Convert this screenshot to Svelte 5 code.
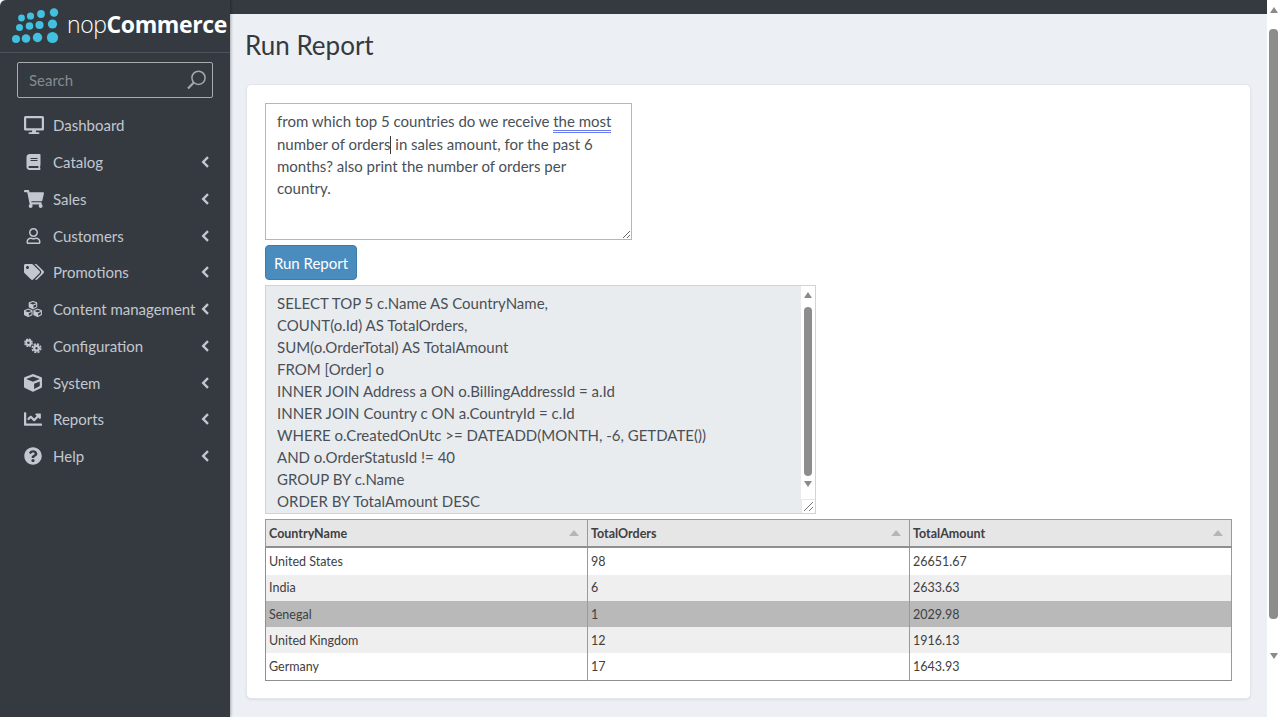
<script>
    const menu = [
        { label: 'Dashboard', icon: 'desktop', sub: false },
        { label: 'Catalog', icon: 'book', sub: true },
        { label: 'Sales', icon: 'cart', sub: true },
        { label: 'Customers', icon: 'user', sub: true },
        { label: 'Promotions', icon: 'tags', sub: true },
        { label: 'Content management', icon: 'cubes', sub: true },
        { label: 'Configuration', icon: 'cogs', sub: true },
        { label: 'System', icon: 'cube', sub: true },
        { label: 'Reports', icon: 'chart', sub: true },
        { label: 'Help', icon: 'help', sub: true }
    ];

    const cubePath = 'M239.1 6.3l-208 78c-18.7 7-31.1 25-31.1 45v225.1c0 18.2 10.3 34.8 26.5 42.9l208 104c13.5 6.8 29.4 6.8 42.9 0l208-104c16.3-8.1 26.5-24.8 26.5-42.9V129.3c0-20-12.4-37.9-31.1-44.9l-208-78C262 2.2 250 2.2 239.1 6.3zM256 68.4l192 72v1.1l-192 78-192-78v-1.1l192-72zm32 356V275.5l160-65v133.9l-160 80z';

    const paths = {
        desktop: { w: 576, h: 512, d: 'M528 0H48C21.5 0 0 21.5 0 48v320c0 26.5 21.5 48 48 48h192l-16 48h-72c-13.3 0-24 10.7-24 24s10.7 24 24 24h272c13.3 0 24-10.7 24-24s-10.7-24-24-24h-72l-16-48h192c26.5 0 48-21.5 48-48V48c0-26.5-21.5-48-48-48zm-16 352H64V64h448v288z' },
        book: { w: 448, h: 512, d: 'M448 360V24c0-13.3-10.7-24-24-24H96C43 0 0 43 0 96v320c0 53 43 96 96 96h328c13.3 0 24-10.7 24-24v-16c0-7.5-3.5-14.3-8.9-18.7-4.2-15.4-4.2-59.3 0-74.7 5.4-4.3 8.9-11.1 8.9-18.6zM128 134c0-3.3 2.7-6 6-6h212c3.3 0 6 2.7 6 6v20c0 3.3-2.7 6-6 6H134c-3.3 0-6-2.7-6-6v-20zm0 64c0-3.3 2.7-6 6-6h212c3.3 0 6 2.7 6 6v20c0 3.3-2.7 6-6 6H134c-3.3 0-6-2.7-6-6v-20zm253.4 250H96c-17.7 0-32-14.3-32-32 0-17.6 14.4-32 32-32h285.4c-1.9 17.1-1.9 46.9 0 64z' },
        cart: { w: 576, h: 512, d: 'M528.12 301.319l47.273-208C578.806 78.301 567.391 64 551.99 64H159.208l-9.166-44.81C147.758 8.021 137.93 0 126.529 0H24C10.745 0 0 10.745 0 24v16c0 13.255 10.745 24 24 24h69.883l70.248 343.435C147.325 417.1 136 435.222 136 456c0 30.928 25.072 56 56 56s56-25.072 56-56c0-15.674-6.447-29.835-16.824-40h209.647C430.447 426.165 424 440.326 424 456c0 30.928 25.072 56 56 56s56-25.072 56-56c0-22.172-12.888-41.332-31.579-50.405l5.517-24.276c3.413-15.018-8.002-29.319-23.403-29.319H218.117l-6.545-32h293.145c11.206 0 20.92-7.754 23.403-18.681z' },
        user: { w: 448, h: 512, d: 'M313.6 304c-28.7 0-42.5 16-89.6 16-47.1 0-60.8-16-89.6-16C60.2 304 0 364.2 0 438.4V464c0 26.5 21.5 48 48 48h352c26.5 0 48-21.5 48-48v-25.6c0-74.2-60.2-134.4-134.4-134.4zM400 464H48v-25.6c0-47.6 38.8-86.4 86.4-86.4 14.6 0 38.3 16 89.6 16 51.7 0 74.9-16 89.6-16 47.6 0 86.4 38.8 86.4 86.4V464zM224 288c79.5 0 144-64.5 144-144S303.5 0 224 0 80 64.5 80 144s64.5 144 144 144zm0-240c52.9 0 96 43.1 96 96s-43.1 96-96 96-96-43.1-96-96 43.1-96 96-96z' },
        tags: { w: 640, h: 512, d: 'M497.941 225.941L286.059 14.059A48 48 0 0 0 252.118 0H48C21.49 0 0 21.49 0 48v204.118a48 48 0 0 0 14.059 33.941l211.882 211.882c18.744 18.745 49.136 18.746 67.882 0l204.118-204.118c18.745-18.745 18.745-49.137 0-67.882zM112 160c-26.51 0-48-21.49-48-48s21.49-48 48-48 48 21.49 48 48-21.49 48-48 48zm513.941 133.823L421.823 497.941c-18.745 18.745-49.137 18.745-67.882 0l-.36-.36L527.64 323.522c16.999-16.999 26.36-39.6 26.36-63.64s-9.362-46.641-26.36-63.64L331.397 0h48.721a48 48 0 0 1 33.941 14.059l211.882 211.882c18.745 18.745 18.745 49.137 0 67.882z' },
        cube: { w: 512, h: 512, d: cubePath },
        chart: { w: 512, h: 512, d: 'M496 384H64V80c0-8.84-7.16-16-16-16H16C7.16 64 0 71.16 0 80v336c0 17.67 14.33 32 32 32h464c8.84 0 16-7.16 16-16v-32c0-8.84-7.16-16-16-16zM464 96H345.94c-21.38 0-32.09 25.85-16.97 40.97l32.4 32.4L288 242.75l-73.37-73.37c-12.5-12.5-32.76-12.5-45.25 0l-68.69 68.69c-6.25 6.25-6.25 16.38 0 22.63l22.62 22.62c6.25 6.25 16.38 6.25 22.63 0L192 237.25l73.37 73.37c12.5 12.5 32.76 12.5 45.25 0l96-96 32.4 32.4c15.12 15.12 40.97 4.41 40.97-16.97V112c0-8.84-7.16-16-16-16z' },
        help: { w: 512, h: 512, d: 'M504 256c0 136.997-111.043 248-248 248S8 392.997 8 256C8 119.083 119.043 8 256 8s248 111.083 248 248zM262.655 90c-54.497 0-89.255 22.957-116.549 63.758-3.536 5.286-2.353 12.415 2.715 16.258l34.699 26.31c5.205 3.947 12.621 3.008 16.665-2.122 17.864-22.658 30.113-35.797 57.303-35.797 20.429 0 45.698 13.148 45.698 32.958 0 14.976-12.363 22.667-32.534 33.976C247.128 238.528 216 254.941 216 296v4c0 6.627 5.373 12 12 12h56c6.627 0 12-5.373 12-12v-1.333c0-28.462 83.186-29.647 83.186-106.667 0-58.002-60.165-102-116.531-102zM256 338c-25.365 0-46 20.635-46 46 0 25.364 20.635 46 46 46s46-20.636 46-46c0-25.365-20.635-46-46-46z' }
    };

    const logoDots = [
        [21.5, 18, 3.4], [30.5, 16, 3.6], [41, 14, 3.9], [54, 12.5, 4.2],
        [19.5, 27.5, 3.5], [29.5, 26, 3.8], [39.5, 25, 4.1], [52.5, 24, 4.6],
        [16, 39, 4], [26, 38.5, 4.3], [37.5, 37.5, 4.7], [52.5, 37.5, 5.6]
    ];

    const sqlLines = [
        'SELECT TOP 5 c.Name AS CountryName,',
        'COUNT(o.Id) AS TotalOrders,',
        'SUM(o.OrderTotal) AS TotalAmount',
        'FROM [Order] o',
        'INNER JOIN Address a ON o.BillingAddressId = a.Id',
        'INNER JOIN Country c ON a.CountryId = c.Id',
        'WHERE o.CreatedOnUtc >= DATEADD(MONTH, -6, GETDATE())',
        'AND o.OrderStatusId != 40',
        'GROUP BY c.Name',
        'ORDER BY TotalAmount DESC'
    ];

    const columns = ['CountryName', 'TotalOrders', 'TotalAmount'];
    const rows = [
        ['United States', '98', '26651.67'],
        ['India', '6', '2633.63'],
        ['Senegal', '1', '2029.98'],
        ['United Kingdom', '12', '1916.13'],
        ['Germany', '17', '1643.93']
    ];
    const selectedRow = 2;
</script>

<div class="shell">
    <aside class="sidebar">
        <div class="brand">
            <svg class="logo-dots" width="62" height="46" viewBox="0 0 62 46">
                {#each logoDots as [cx, cy, r]}
                    <circle {cx} {cy} {r} fill="#41c0e0" />
                {/each}
            </svg>
            <span class="brand-name"><span class="nop">nop</span><b>Commerce</b></span>
        </div>
        <div class="search">
            <span>Search</span>
            <svg width="22" height="22" viewBox="0 0 22 22" fill="none" stroke="#a5a8ab" stroke-width="1.5">
                <circle cx="12.5" cy="8.8" r="6.6" />
                <path d="M7.8 13.6L2 19.5" stroke-width="2.2" />
            </svg>
        </div>
        <nav>
            {#each menu as item}
                <div class="item">
                    <span class="icon">
                        {#if item.icon === 'cubes'}
                            <svg width="20" height="18" viewBox="0 0 20 18" fill="#c2c7d0">
                                <g transform="translate(5.2 0) scale(0.0186)"><path d={cubePath} /></g>
                                <g transform="translate(0 8.5) scale(0.0186)"><path d={cubePath} /></g>
                                <g transform="translate(10.4 8.5) scale(0.0186)"><path d={cubePath} /></g>
                            </svg>
                        {:else if item.icon === 'cogs'}
                            <svg width="21" height="18" viewBox="0 0 21 18" fill="none" stroke="#c2c7d0">
                                <circle cx="5.2" cy="5.2" r="2.6" stroke-width="2.2" />
                                <circle cx="5.2" cy="5.2" r="4.2" stroke-width="1.8" stroke-dasharray="2.2 1.1" />
                                <circle cx="14.6" cy="11.6" r="2.7" stroke-width="2.6" />
                                <circle cx="14.6" cy="11.6" r="4.9" stroke-width="2" stroke-dasharray="2.4 1.45" />
                            </svg>
                        {:else}
                            <svg class={item.icon} viewBox="0 0 {paths[item.icon].w} {paths[item.icon].h}" fill="#c2c7d0">
                                <path d={paths[item.icon].d} />
                            </svg>
                        {/if}
                    </span>
                    <span class="label">{item.label}</span>
                    {#if item.sub}
                        <svg class="chevron" width="9" height="12" viewBox="0 0 9 12" fill="none" stroke="#c2c7d0" stroke-width="2.4">
                            <path d="M7 1.2L2.2 6L7 10.8" />
                        </svg>
                    {/if}
                </div>
            {/each}
        </nav>
    </aside>

    <main class="main">
        <div class="topbar"></div>
        <h1>Run Report</h1>
        <section class="card">
            <div class="prompt">from which top 5 countries do we receive <span class="flagged">the most</span> number of orders<span class="caret"></span> in sales amount, for the past 6 months? also print the number of orders per country.</div>
            <button class="run">Run Report</button>
            <div class="sql">
                <div class="sql-text">
                    {#each sqlLines as line}
                        <div>{line}</div>
                    {/each}
                </div>
                <div class="bar inner">
                    <span class="arrow up"></span>
                    <span class="thumb inner-thumb"></span>
                    <span class="arrow down"></span>
                    <span class="grip">
                        <svg width="12" height="12" viewBox="0 0 12 12" stroke="#777" stroke-width="1">
                            <path d="M2 11L11 2M7 11L11 7" />
                        </svg>
                    </span>
                </div>
            </div>
            <table>
                <thead>
                    <tr>
                        {#each columns as col}
                            <th><div class="th-inner">{col}<span class="sort"></span></div></th>
                        {/each}
                    </tr>
                </thead>
                <tbody>
                    {#each rows as row, i}
                        <tr class:odd={i % 2 === 1} class:selected={i === selectedRow}>
                            {#each row as cell}
                                <td>{cell}</td>
                            {/each}
                        </tr>
                    {/each}
                </tbody>
            </table>
        </section>
    </main>

    <div class="bar page">
        <span class="arrow up"></span>
        <span class="thumb page-thumb"></span>
        <span class="arrow down"></span>
    </div>
</div>

<style>
    :global(body) {
        margin: 0;
        background: #fff;
        font-family: "Lato", "Liberation Sans", sans-serif;
    }

    .shell {
        display: flex;
        height: 717px;
        overflow: hidden;
    }

    .sidebar {
        width: 230px;
        flex: none;
        background: #343a40;
        color: #c2c7d0;
        border-top-left-radius: 6px;
        box-shadow: 1px 0 3px rgba(0, 0, 0, 0.3);
        z-index: 1;
    }

    .brand {
        position: relative;
        height: 52px;
        border-bottom: 1px solid #4b545c;
        box-sizing: content-box;
    }

    .logo-dots {
        position: absolute;
        left: 0;
        top: 0;
    }

    .brand-name {
        position: absolute;
        left: 67px;
        top: 8px;
        font-family: "Open Sans", sans-serif;
        font-size: 23px;
        line-height: 32px;
        letter-spacing: -0.4px;
        color: #fff;
        white-space: nowrap;
    }

    .nop {
        font-weight: 300;
    }

    .brand-name b {
        font-weight: 700;
    }

    .search {
        margin: 9px 17px 0;
        height: 34px;
        display: flex;
        align-items: center;
        justify-content: space-between;
        padding: 0 4px 0 11px;
        border: 1px solid #a8acae;
        border-radius: 2px;
        color: #868b90;
        font-size: 15px;
    }

    nav {
        margin-top: 9px;
    }

    .item {
        display: flex;
        align-items: center;
        height: 36.75px;
        padding-left: 24px;
        font-size: 15px;
    }

    .icon {
        width: 29px;
        flex: none;
        display: flex;
    }

    .icon svg {
        width: 18px;
        height: 18px;
    }

    .icon svg.desktop {
        width: 20px;
    }

    .icon svg.cart {
        width: 20px;
    }

    .icon svg.tags {
        width: 20px;
    }

    .icon svg.book,
    .icon svg.user {
        margin-left: 2px;
        width: 15px;
        height: 16px;
    }

    .label {
        flex: 1;
        white-space: nowrap;
    }

    .chevron {
        margin-right: 20px;
    }

    .main {
        flex: 1;
        min-width: 0;
        background: #ecf0f5;
        padding: 0 16px;
    }

    .topbar {
        height: 14px;
        margin: 0 -16px;
        background: #343a40;
    }

    h1 {
        margin: 0;
        height: 70px;
        line-height: 62px;
        font-size: 26px;
        font-weight: 400;
        color: #343a40;
        margin-left: -1px;
    }

    .card {
        height: 615px;
        box-sizing: border-box;
        padding: 18px 18px 0;
        background: #fff;
        border: 1px solid #e3e6ea;
        border-radius: 5px;
        box-shadow: 0 1px 2px rgba(0, 0, 0, 0.08);
        display: flex;
        flex-direction: column;
        align-items: flex-start;
        color: #495057;
        font-size: 15px;
    }

    .prompt {
        width: 367px;
        height: 137px;
        box-sizing: border-box;
        padding: 6px 11px;
        line-height: 22px;
        border: 1px solid #92bdf0;
        resize: both;
        overflow: auto;
    }

    .flagged {
        border-bottom: 3px double #6c7cf0;
        line-height: 17px;
        display: inline-block;
    }

    .caret {
        display: inline-block;
        width: 1px;
        height: 18px;
        margin-bottom: -4px;
        background: #343a40;
    }

    .run {
        margin-top: 5px;
        width: 92px;
        height: 35px;
        padding: 0;
        background: #4a8cbd;
        border: 1px solid #3c7cab;
        border-radius: 4px;
        color: #fff;
        font: 15px "Lato", sans-serif;
    }

    .sql {
        margin-top: 5px;
        width: 551px;
        height: 229px;
        box-sizing: border-box;
        border: 1px solid #ced4da;
        display: flex;
        background: #e9ecef;
    }

    .sql-text {
        flex: 1;
        padding: 6px 11px;
        line-height: 22px;
        white-space: nowrap;
    }

    .bar {
        display: flex;
        flex-direction: column;
        align-items: center;
        background: #fff;
    }

    .bar.inner {
        width: 14px;
        padding-top: 6px;
        box-sizing: border-box;
        position: relative;
    }

    .bar.page {
        width: 13px;
        flex: none;
        padding-top: 7px;
        box-sizing: border-box;
    }

    .arrow {
        width: 0;
        height: 0;
        border-left: 4.5px solid transparent;
        border-right: 4.5px solid transparent;
    }

    .arrow.up {
        border-bottom: 6px solid #8a8a8a;
    }

    .arrow.down {
        border-top: 6px solid #8a8a8a;
    }

    .thumb {
        width: 8px;
        border-radius: 4px;
        background: #8d8d8d;
    }

    .inner-thumb {
        height: 169px;
        margin: 9px 0 5px;
    }

    .page-thumb {
        height: 590px;
        margin: 16px 0 34px;
        width: 9px;
    }

    .grip {
        position: absolute;
        right: 0;
        bottom: 0;
        width: 13px;
        height: 13px;
        display: flex;
        border-left: 1px solid #e8e8e8;
        border-top: 1px solid #e8e8e8;
    }

    table {
        margin-top: 5px;
        width: 967px;
        height: 162px;
        table-layout: fixed;
        border-collapse: collapse;
        border: 1px solid #8f8f8f;
        font-size: 12.5px;
        color: #404040;
    }

    th {
        height: 26px;
        padding: 0 3px;
        text-align: left;
        font-weight: 700;
        background: #e6e6e6;
        border: 1px solid #9a9a9a;
        border-bottom: 2px solid #8f8f8f;
    }

    .th-inner {
        display: flex;
        align-items: center;
        justify-content: space-between;
    }

    .sort {
        width: 0;
        height: 0;
        margin-right: 5px;
        border-left: 5px solid transparent;
        border-right: 5px solid transparent;
        border-bottom: 6px solid #b5b5b5;
    }

    td {
        padding: 0 3px;
        border-right: 1px solid #9a9a9a;
    }

    tr.odd td {
        background: #efefef;
    }

    tr.selected td {
        background: #b9b9b9;
    }
</style>
